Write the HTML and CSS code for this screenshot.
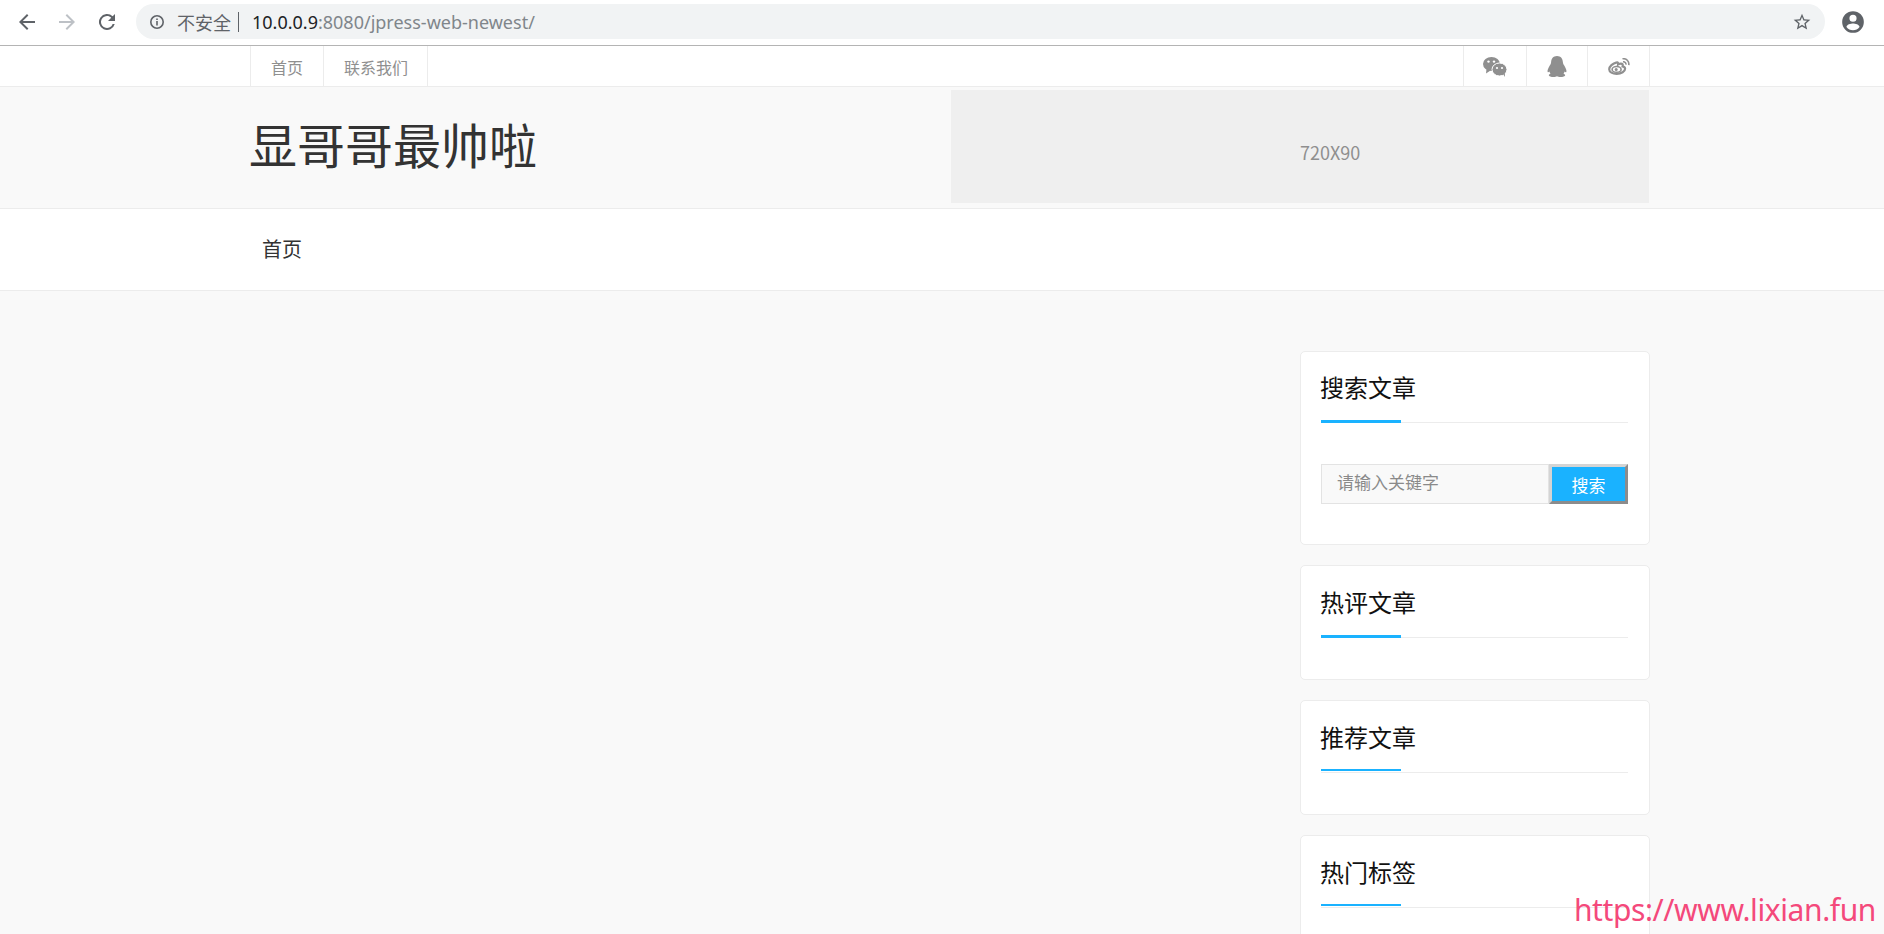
FILE: index.html
```html
<!DOCTYPE html>
<html lang="zh-CN">
<head>
    <meta charset="UTF-8">
    <title>显哥哥最帅啦</title>
    <link rel="stylesheet" href="styles.css">
</head>
<body>
    <div class="browser-bar">
        <svg class="tool" viewBox="0 0 24 24"><path d="M20 11H7.8l5.6-5.6L12 4l-8 8 8 8 1.4-1.4L7.8 13H20z"/></svg>
        <svg class="tool tool-off" viewBox="0 0 24 24"><path d="M4 11h12.2l-5.6-5.6L12 4l8 8-8 8-1.4-1.4 5.6-5.6H4z"/></svg>
        <svg class="tool" viewBox="0 0 24 24"><path d="M17.65 6.35A8 8 0 1 0 19.73 14h-2.08A6 6 0 1 1 12 6c1.66 0 3.14.69 4.22 1.78L13 11h7V4z"/></svg>
        <div class="omnibox">
            <svg class="info" viewBox="0 0 16 16"><circle cx="8" cy="8" r="6.2"/><path class="info-mark" d="M7.2 7h1.6v4.6H7.2zM7.2 4.4h1.6V6H7.2z"/></svg>
            <span class="insecure">不安全</span>
            <span class="url"><span class="url-host">10.0.0.9</span>:8080/jpress-web-newest/</span>
            <svg class="star" viewBox="0 0 24 24"><path d="M22 9.24l-7.19-.62L12 2 9.19 8.63 2 9.24l5.46 4.73L5.82 21 12 17.27 18.18 21l-1.63-7.03zM12 15.4l-3.76 2.27 1-4.28-3.32-2.88 4.38-.38L12 6.1l1.71 4.04 4.38.38-3.32 2.88 1 4.28z"/></svg>
        </div>
        <svg class="account" viewBox="0 0 24 24"><path d="M12 2a10 10 0 1 0 0 20 10 10 0 0 0 0-20zm0 3.2a3.3 3.3 0 1 1 0 6.6 3.3 3.3 0 0 1 0-6.6zm0 14.4a7.6 7.6 0 0 1-6-3c.03-2 4-3.1 6-3.1s5.97 1.1 6 3.1a7.6 7.6 0 0 1-6 3z"/></svg>
    </div>

    <div class="topbar">
        <div class="wrap topbar-inner">
            <ul class="top-links">
                <li>首页</li>
                <li>联系我们</li>
            </ul>
            <ul class="top-social">
                <li class="social-wechat">
                    <svg class="social-icon icon-wechat" viewBox="0 0 24 20">
                        <ellipse cx="8.500" cy="7" rx="8.500" ry="7"/>
                        <path d="M3.500 12l-.5 4.500 4.500-3z"/>
                        <ellipse class="bubble-edge" cx="16.500" cy="12.500" rx="7.500" ry="6.500"/>
                        <path d="M20 17l2 3-.2-4z"/>
                        <circle class="eye" cx="5.500" cy="4.600" r="1.200"/>
                        <circle class="eye" cx="11" cy="4.600" r="1.200"/>
                        <circle class="eye" cx="14" cy="11" r="1.100"/>
                        <circle class="eye" cx="19" cy="11" r="1.100"/>
                    </svg>
                </li>
                <li>
                    <svg class="social-icon icon-qq" viewBox="0 0 20 21">
                        <path d="M10 0c3.900 0 5.700 2.900 5.900 6.200.1 1.500.8 2.400 1.500 3.600 1.500 2.500 2.600 5.300 1.900 6.300-.3.400-1 .2-1.800-.5-.1.800-.5 1.500-1 2.100 1 .4 1.700.9 1.700 1.500 0 1-2.400 1.800-4.700 1.800-1.600 0-2.700-.3-3.500-.8-.8.500-1.900.8-3.500.8-2.300 0-4.700-.8-4.700-1.800 0-.6.700-1.100 1.700-1.500-.5-.6-.9-1.300-1-2.100-.8.700-1.500.9-1.800.5-.7-1 .4-3.800 1.900-6.300.7-1.200 1.400-2.100 1.500-3.600C4.300 2.900 6.100 0 10 0z"/>
                    </svg>
                </li>
                <li class="social-weibo">
                    <svg class="social-icon icon-weibo" viewBox="0 0 22 17">
                        <path class="weibo-body" d="M8.800 4.300C4.600 5.200 1.200 8.600 1.200 11.300c0 2.700 3.400 4.500 7.500 4.500 4.700 0 8.400-2.400 8.400-5 0-1.700-1.700-2.200-2.500-2.400.5-1.700.1-2.800-1.800-2.800-1 0-2.200.5-2.700.9.200-1.600-.2-2.500-1.300-2.200z"/>
                        <ellipse class="weibo-ring" cx="8.600" cy="11.400" rx="4.500" ry="2.900"/>
                        <circle cx="8.200" cy="11.500" r="1.500"/>
                        <path class="weibo-wave" d="M14.500.8c3.800-.6 6.900 2.400 6.300 6.300M15 3.800c1.900-.2 3.200 1 2.900 2.900"/>
                    </svg>
                </li>
            </ul>
        </div>
    </div>

    <header class="site-header">
        <div class="wrap site-header-inner">
            <h1 class="site-title">显哥哥最帅啦</h1>
            <div class="ad-slot">720X90</div>
        </div>
    </header>

    <nav class="main-nav">
        <div class="wrap">
            <a class="main-nav-item">首页</a>
        </div>
    </nav>

    <main class="wrap content">
        <aside class="sidebar">
            <section class="widget">
                <h3 class="widget-title">搜索文章</h3>
                <form class="search-form">
                    <input class="search-input" type="text" placeholder="请输入关键字">
                    <button class="search-btn" type="button">搜索</button>
                </form>
            </section>
            <section class="widget">
                <h3 class="widget-title">热评文章</h3>
            </section>
            <section class="widget">
                <h3 class="widget-title widget-title-thin">推荐文章</h3>
            </section>
            <section class="widget">
                <h3 class="widget-title widget-title-thin">热门标签</h3>
            </section>
        </aside>
    </main>

    <div class="watermark">https://www.lixian.fun</div>
</body>
</html>
```

FILE: styles.css
```css
:root {
    --line: #ececec;
    --page: #f9f9f9;
    --accent: #1ab2ff;
    --muted: #8f8f8f;
    --cjk: "Noto Sans CJK SC", "Noto Sans", sans-serif;
}

* {
    margin: 0;
    padding: 0;
    box-sizing: border-box;
}

html, body {
    height: 934px;
    overflow: hidden;
}

body {
    position: relative;
    font-family: var(--cjk);
    background: var(--page);
    color: #333;
}

ul {
    list-style: none;
}

.wrap {
    width: 1400px;
    margin-left: 250px;
}

/* browser chrome */
.browser-bar {
    height: 46px;
    padding: 4px 0 6px 15px;
    display: flex;
    align-items: center;
    background: #fff;
    border-bottom: 1px solid #b4b4b4;
}

.tool {
    width: 24px;
    height: 24px;
    margin-right: 16px;
    fill: #5f6368;
}

.tool-off {
    fill: #bdc1c6;
}

.omnibox {
    width: 1689px;
    height: 35px;
    margin-left: 1px;
    padding: 0 13px 0 13px;
    display: flex;
    align-items: center;
    background: #f1f3f4;
    border-radius: 18px;
    font-family: "Noto Sans", var(--cjk);
    font-size: 18px;
    color: #80868b;
}

.info {
    width: 16px;
    height: 16px;
    margin-right: 12px;
    fill: none;
    stroke: #5f6368;
    stroke-width: 1.6;
}

.info-mark {
    fill: #5f6368;
    stroke: none;
}

.insecure {
    padding-right: 7px;
    border-right: 1px solid #5f6368;
    margin-right: 13px;
    font-family: var(--cjk);
    font-size: 18px;
    line-height: 20px;
    color: #5f6368;
}

.url {
    flex: 1;
}

.url-host {
    color: #202124;
}

.star {
    width: 20px;
    height: 20px;
    fill: #5f6368;
}

.account {
    width: 26px;
    height: 26px;
    margin-left: 15px;
    fill: #5f6368;
}

/* top bar */
.topbar {
    height: 41px;
    background: #fff;
    border-bottom: 1px solid var(--line);
}

.topbar-inner {
    display: flex;
    justify-content: space-between;
}

.top-links, .top-social {
    display: flex;
    height: 41px;
    border-right: 1px solid var(--line);
}

.top-links li, .top-social li {
    display: flex;
    align-items: center;
    justify-content: center;
    border-left: 1px solid var(--line);
    font-size: 16px;
    color: var(--muted);
}

.top-links li {
    padding: 0 20px;
}

.top-links li:last-child {
    padding-right: 19px;
}

.top-social li {
    padding: 0 20px;
}

.top-social .social-wechat {
    padding: 0 19px;
}

.top-social .social-weibo {
    padding: 0 19px 0 20px;
}

.social-icon {
    display: block;
    fill: var(--muted);
}

.icon-wechat {
    width: 24px;
    height: 20px;
}

.icon-qq {
    width: 20px;
    height: 21px;
}

.icon-weibo {
    width: 22px;
    height: 17px;
}

.bubble-edge {
    stroke: #fff;
    stroke-width: 1;
}

.eye {
    fill: #fff;
}

.weibo-body {
    fill: none;
    stroke: var(--muted);
    stroke-width: 2.2;
}

.weibo-ring, .weibo-wave {
    fill: none;
    stroke: var(--muted);
    stroke-width: 1.6;
}

/* header */
.site-header {
    height: 122px;
    background: var(--page);
    border-bottom: 1px solid var(--line);
}

.site-header-inner {
    display: flex;
    justify-content: space-between;
    padding: 3px 1px 0 0;
}

.site-title {
    margin-left: -1px;
    font-size: 48px;
    font-weight: 400;
    line-height: 106px;
    color: #333;
}

.ad-slot {
    width: 698px;
    height: 113px;
    padding: 47px 0 0 349px;
    background: #efefef;
    font-size: 18px;
    line-height: 30px;
    color: var(--muted);
}

/* nav */
.main-nav {
    height: 82px;
    background: #fff;
    border-bottom: 1px solid var(--line);
}

.main-nav-item {
    display: inline-block;
    padding: 0 12px;
    font-size: 20px;
    line-height: 80px;
    color: #333;
}

/* sidebar */
.content {
    display: flex;
    justify-content: flex-end;
    padding-top: 60px;
}

.sidebar {
    width: 350px;
    display: flex;
    flex-direction: column;
    gap: 20px;
}

.widget {
    min-height: 115px;
    padding: 20px 21px 21px 20px;
    background: #fff;
    border: 1px solid var(--line);
    border-radius: 5px;
}

.widget-title {
    position: relative;
    height: 51px;
    font-size: 24px;
    font-weight: 400;
    line-height: 30px;
    text-indent: -1px;
    color: #111;
    border-bottom: 1px solid var(--line);
}

.widget + .widget .widget-title {
    height: 52px;
    line-height: 32px;
}

.widget-title::after {
    content: '';
    position: absolute;
    left: 0;
    bottom: -1px;
    width: 80px;
    height: 3px;
    background: var(--accent);
}

.widget-title-thin::after {
    height: 2px;
    bottom: 1px;
}

.search-form {
    display: flex;
    margin-top: 41px;
    margin-bottom: 19px;
}

.search-input {
    width: 228px;
    height: 40px;
    padding: 0 15px 6px;
    background: #f9f9f9;
    border: 1px solid #e3e3e3;
    font-family: var(--cjk);
    font-size: 17px;
    color: #333;
}

.search-input::placeholder {
    color: #8a8a8a;
}

.search-btn {
    width: 79px;
    height: 40px;
    background: var(--accent);
    border-width: 3px;
    border-style: solid;
    border-color: #d4d4d4 #8c8c8c #8c8c8c #d4d4d4;
    font-family: var(--cjk);
    font-size: 17px;
    color: #fff;
}

.watermark {
    position: absolute;
    right: 8px;
    top: 890px;
    font-family: "Noto Sans", sans-serif;
    font-size: 30px;
    letter-spacing: -0.4px;
    line-height: 40px;
    color: #f4497b;
}
```
